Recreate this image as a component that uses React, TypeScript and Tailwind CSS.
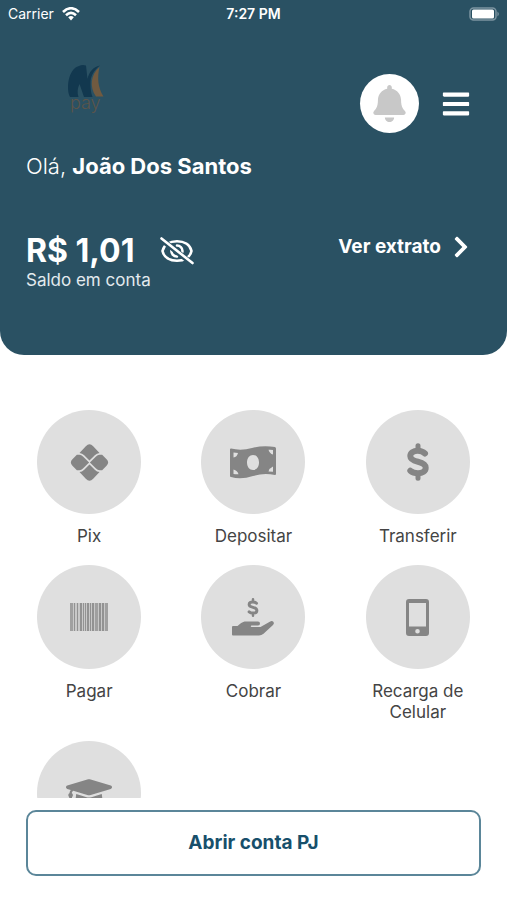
import { FaBell, FaBars, FaChevronRight, FaGraduationCap } from "react-icons/fa"

interface Service {
    icon: React.ReactNode
    label: string
    hideLabel?: boolean
}

function EyeOffIcon() {
    return (
        <svg width="34" height="28" viewBox="0 0 34 28" fill="none" stroke="currentColor" strokeLinecap="round">
            <mask id="slash" maskUnits="userSpaceOnUse" x="0" y="0" width="34" height="28">
                <rect width="34" height="28" fill="white" stroke="none" />
                <path d="M0 3L32 28" stroke="black" strokeWidth="3" />
                <path d="M1.500 1.500L32.500 26" stroke="black" strokeWidth="4" />
            </mask>
            <g mask="url(#slash)" strokeWidth="2.600">
                <path d="M2.500 14C4 7.500 10 4.300 17 4.300S30 7.500 31.500 14C30 20.500 24 23.700 17 23.700S4 20.500 2.500 14Z" />
                <path d="M17 8.500A5.500 5.500 0 0 1 22.500 14A5.500 5.500 0 0 1 21 17.500" />
                <path d="M11.500 13A5.500 5.500 0 0 0 17 19.500" />
            </g>
            <path d="M1.500 1.500L32.500 26" strokeWidth="2.600" />
        </svg>
    )
}

function PixIcon() {
    return (
        <svg width="39" height="39" viewBox="0 0 37 37" fill="currentColor">
            <path d="M9 9.500L15 3Q18.500 -0.600 22 3L28 9.500Q25.500 9.700 23.500 11.700L18.500 16.500L13.500 11.700Q11.500 9.700 9 9.500Z" />
            <path d="M9 27.500L15 34Q18.500 37.600 22 34L28 27.500Q25.500 27.300 23.500 25.300L18.500 20.500L13.500 25.300Q11.500 27.300 9 27.500Z" />
            <path d="M6.500 11.200H9Q10.800 11.200 12.300 12.700L18.100 18.500L12.300 24.300Q10.800 25.800 9 25.800H6.500L2.300 21.500Q-0.700 18.500 2.300 15.500Z" />
            <path d="M30.500 11.200H28Q26.200 11.200 24.700 12.700L18.900 18.500L24.700 24.300Q26.200 25.800 28 25.800H30.500L34.700 21.500Q37.700 18.500 34.700 15.500Z" />
        </svg>
    )
}

function MoneyIcon() {
    return (
        <svg width="48" height="34" viewBox="0 0 48 34" fill="currentColor" fillRule="evenodd">
            <path d="M1 4.500Q1 3.500 2 3.500Q12 6 23 3Q34 0 46 2Q47 2.500 47 3.500V29Q47 30 46 30Q35 27.500 24 31Q12 35 2 32Q1 32 1 31ZM24 10C20.500 10 18 13 18 17.500S20.500 25 24 25S30 22 30 17.500S27.500 10 24 10ZM4.500 7.500V12.500Q8 12 9 8ZM44 5Q42 4.500 39.500 4.700Q40.500 8.500 44 9.500ZM4.500 24.500V29Q7 29.500 9.500 29.300Q8.500 25.500 4.500 24.500ZM44 21.500Q40.500 23 39.500 26.500L44 26.800Z" />
        </svg>
    )
}

function DollarIcon({ className }: { className: string }) {
    return (
        <svg className={className} viewBox="0 0 22 38" fill="none" stroke="currentColor" strokeLinecap="round">
            <path d="M11 2.700V7M11 31V35.300" strokeWidth="5" />
            <path
                d="M18 10.500C16 8.600 13.500 7.800 10.800 7.800C6.300 7.800 3.300 9.800 3.300 13C3.300 16.500 6.500 17.700 11 18.700C15.500 19.800 18.700 21.300 18.700 24.800C18.700 28.300 15.500 30.200 11 30.200C7.800 30.200 5.200 29.400 3.300 27.700"
                strokeWidth="6"
            />
        </svg>
    )
}

const bars = [
    [0, 3], [4, 1], [7, 1], [10, 2], [13, 1], [15, 1], [17, 2], [20, 1], [22, 2], [25, 3], [29, 2], [32, 2], [35, 3],
]

function BarcodeIcon() {
    return (
        <svg width="38" height="28" viewBox="0 0 38 28" fill="currentColor">
            <rect x="0" y="0" width="38" height="28" opacity="0.25" />
            {bars.map(([x, w]) => (
                <rect key={x} x={x} y="0" width={w} height="28" opacity={w === 3 ? 0.6 : 0.8} />
            ))}
        </svg>
    )
}

function ReceiveIcon() {
    return (
        <div className="flex flex-col items-center gap-1">
            <DollarIcon className="w-3 h-[19px]" />
            <svg width="43" height="15" viewBox="0 0 43 15" fill="currentColor">
                <path d="M1 5H5.500C8 3 10 0.500 14 0.500H26Q28 0.500 28 2.500Q28 4.500 26 4.500H19.500Q18.800 4.500 18.800 5.200T19.500 6H28.500L37.800 0.700Q40 -0.500 41.300 0.800Q42.600 2.300 41 3.900L31.500 12.800Q29.500 14.500 27 14.500H1Q0 14.500 0 13.500V6Q0 5 1 5Z" />
            </svg>
        </div>
    )
}

function PhoneIcon() {
    return (
        <svg width="23" height="37" viewBox="0 0 23 37" fill="currentColor" fillRule="evenodd">
            <path d="M3 0H20Q23 0 23 3V34Q23 37 20 37H3Q0 37 0 34V3Q0 0 3 0ZM3 4V27.500H20V4ZM11.500 30A2.300 2.300 0 1 0 11.500 34.600A2.300 2.300 0 1 0 11.500 30Z" />
        </svg>
    )
}

function Logo() {
    return (
        <svg width="40" height="52" viewBox="0 0 40 52" role="img" aria-label="Pay">
            <path
                d="M4 33C0 25 2 5 13 2Q16 0.500 20 1.500L21.500 15C23 8 27 3 34 1.500C27 7 24.500 13 24.500 19C24.500 25 25 29 26.500 33H18L13.500 20C11.500 24 11 29 12.500 33Z"
                fill="#12384f"
            />
            <path d="M33.500 3C31 14 32 24 37.500 32.500H30C23 23 25 10 33.500 3Z" fill="#705a40" />
            <text x="4" y="45" fontSize="18" fill="#5c554a" fontWeight="300">
                pay
            </text>
        </svg>
    )
}

function WifiIcon() {
    return (
        <svg width="18" height="14" viewBox="0 0 18 14" fill="none" stroke="white" strokeWidth="2.600">
            <path d="M1 5Q9 -2.500 17 5" />
            <path d="M4 8.200Q9 3.600 14 8.200" />
            <path d="M6.200 10.200Q9 7.800 11.800 10.200L9 13.500Z" fill="white" stroke="none" />
        </svg>
    )
}

function BatteryIcon() {
    return (
        <svg width="30" height="14" viewBox="0 0 30 14" fill="none">
            <rect x="1" y="1" width="26" height="12" rx="3.500" stroke="#7c94a1" strokeWidth="1.500" />
            <rect x="3" y="2.500" width="22" height="9" rx="1.500" fill="white" />
            <path d="M28.500 4.500Q31 7 28.500 9.500Z" fill="#8ba0ac" />
        </svg>
    )
}

const services: Service[] = [
    { icon: <PixIcon />, label: "Pix" },
    { icon: <MoneyIcon />, label: "Depositar" },
    { icon: <DollarIcon className="w-[22px] h-[38px]" />, label: "Transferir" },
    { icon: <BarcodeIcon />, label: "Pagar" },
    { icon: <ReceiveIcon />, label: "Cobrar" },
    { icon: <PhoneIcon />, label: "Recarga de Celular" },
    { icon: <FaGraduationCap size={46} />, label: "Educação", hideLabel: true },
]

export default function App() {
    return (
        <div className="h-screen flex flex-col bg-white font-['Inter',sans-serif]">
            <header className="shrink-0 bg-[#2a5163] text-white rounded-b-3xl pb-[66px]">
                {/* Status bar */}
                <div className="h-7 grid grid-cols-3 items-center px-2 text-sm">
                    <div className="flex items-center gap-2">
                        Carrier
                        <WifiIcon />
                    </div>
                    <span className="text-center font-semibold">7:27 PM</span>
                    <div className="flex justify-end">
                        <BatteryIcon />
                    </div>
                </div>

                <div className="px-[26px]">
                    <div className="mt-[46px] flex items-center justify-between pl-10 pr-2.5">
                        <div className="self-start -mt-2.5">
                            <Logo />
                        </div>
                        <div className="flex items-center gap-[22px]">
                            <button aria-label="Notificações" className="size-[59px] rounded-full bg-white text-[#c8c8c8] flex items-center justify-center">
                                <FaBell size={37} />
                            </button>
                            <button aria-label="Menu">
                                <FaBars size={30} />
                            </button>
                        </div>
                    </div>

                    <p className="mt-5 text-[22px] leading-[26px] font-light">
                        Olá, <strong className="font-bold">João Dos Santos</strong>
                    </p>

                    <div className="mt-[52px] flex items-start justify-between pr-2">
                        <div>
                            <div className="flex items-center gap-[26px] h-10">
                                <span className="text-[32px] font-bold">R$ 1,01</span>
                                <button aria-label="Ocultar saldo">
                                    <EyeOffIcon />
                                </button>
                            </div>
                            <p className="text-[17px] leading-[18px] text-[#e3eaee]">Saldo em conta</p>
                        </div>
                        <a href="#extrato" className="h-8 flex items-center gap-2 text-[19px] font-bold">
                            Ver extrato
                            <FaChevronRight size={24} />
                        </a>
                    </div>
                </div>
            </header>

            {/* Services */}
            <main className="flex-1 min-h-0 overflow-hidden pt-[55px]">
                <div className="grid grid-cols-3 gap-y-[18px] px-[7px]">
                    {services.map((service) => (
                        <button
                            key={service.label}
                            aria-label={service.label}
                            className="flex flex-col items-center justify-start gap-3"
                        >
                            <span className="size-26 rounded-full bg-[#dfdfdf] text-[#858585] flex items-center justify-center">
                                {service.icon}
                            </span>
                            {!service.hideLabel && (
                                <span className="w-26 text-[17px] leading-[21px] text-[#444444]">{service.label}</span>
                            )}
                        </button>
                    ))}
                </div>
            </main>

            <footer className="shrink-0 px-[26px] pt-3 pb-6">
                <button className="w-full h-[66px] rounded-[10px] border-2 border-[#5b8699] text-[19px] font-bold text-[#174f6b]">
                    Abrir conta PJ
                </button>
            </footer>
        </div>
    )
}
